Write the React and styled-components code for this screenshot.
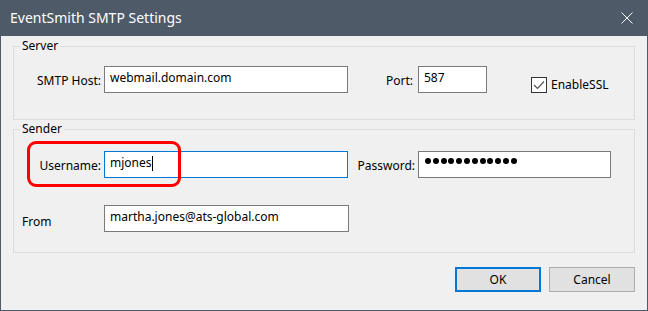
import styled, { createGlobalStyle } from 'styled-components';

const GlobalStyle = createGlobalStyle`
  html, body {
    margin: 0;
    padding: 0;
    background: #f0f0f0;
  }
  body {
    font-family: "Noto Sans", "DejaVu Sans", sans-serif;
    font-size: 12px;
    color: #000;
  }
`;

const Window = styled.div`
  width: 648px;
  height: 311px;
  box-sizing: border-box;
  border: 1px solid #4e5a67;
  border-top: 0;
  background: #f0f0f0;
  display: flex;
  flex-direction: column;
`;

const TitleBar = styled.div`
  height: 36px;
  flex: none;
  background: #4e5a67;
  color: #fff;
  display: flex;
  align-items: center;
  justify-content: space-between;
  padding: 0 14px 0 9px;
`;

const Title = styled.span`
  font-size: 14px;
  line-height: 18px;
`;

const CloseButton = styled.div`
  width: 12px;
  height: 12px;
  display: flex;
`;

const Body = styled.div`
  display: flex;
  flex-direction: column;
  padding: 2px 12px 0 12px;
`;

const GroupBox = styled.fieldset`
  margin: ${props => props.$top || 0}px 0 0 0;
  border: 1px solid #dcdcdc;
  padding: ${props => props.$pad};
  min-width: 0;
  display: flex;
  flex-direction: column;
  gap: 27px;
`;

const Legend = styled.legend`
  padding: 0 2px;
  line-height: 16px;
  font-size: 12px;
`;

const Row = styled.div`
  position: relative;
  display: flex;
  align-items: flex-start;
  height: 27px;
`;

const Label = styled.span`
  width: ${props => props.$width}px;
  margin-right: ${props => props.$gap ?? 3}px;
  box-sizing: border-box;
  padding: ${props => props.$drop ?? 1}px 0 0 ${props => (props.$left ? 2 : 0)}px;
  text-align: ${props => (props.$left ? 'left' : 'right')};
  line-height: 27px;
  white-space: nowrap;
  flex: none;
`;

const TextBox = styled.div`
  width: ${props => props.$width}px;
  height: 27px;
  box-sizing: border-box;
  border: 1px solid ${props => (props.$focused ? '#0078d7' : '#7a7a7a')};
  background: #fff;
  padding: 0 5px;
  line-height: 22px;
  display: flex;
  align-items: flex-start;
  flex: none;
  white-space: nowrap;
`;

const Caret = styled.span`
  width: 1px;
  height: 15px;
  margin-top: 4px;
  background: #000;
`;

const Dots = styled.div`
  display: flex;
  gap: 1.8px;
  margin-top: 6px;
  margin-left: 1px;
`;

const Dot = styled.span`
  width: 6px;
  height: 6px;
  border-radius: 50%;
  background: #000;
`;

const CheckGroup = styled.label`
  display: flex;
  align-items: center;
  margin-left: 44px;
  margin-top: 10px;
`;

const CheckBox = styled.span`
  width: 16px;
  height: 16px;
  box-sizing: border-box;
  border: 1px solid #333;
  background: #fff;
  display: flex;
  align-items: center;
  justify-content: center;
  margin-right: 4px;
`;

const Highlight = styled.div`
  position: absolute;
  left: 7px;
  top: -10px;
  width: 154px;
  height: 46px;
  box-sizing: border-box;
  border: 3px solid #ff0000;
  border-radius: 9px;
  pointer-events: none;
`;

const ButtonRow = styled.div`
  display: flex;
  justify-content: flex-end;
  gap: 8px;
  margin-top: 14px;
`;

const Button = styled.button`
  width: 86px;
  height: 25px;
  box-sizing: border-box;
  background: #e1e1e1;
  border: ${props => (props.$primary ? '2px solid #0078d7' : '1px solid #adadad')};
  font-family: inherit;
  font-size: 12px;
  color: #000;
  padding: 0;
`;

const DOT_COUNT = 12;

export default function App() {
  return (
    <>
      <GlobalStyle />
      <Window>
        <TitleBar>
          <Title>EventSmith SMTP Settings</Title>
          <CloseButton>
            <svg width="12" height="12" viewBox="0 0 12 12">
              <path d="M0.5 0.5 L11.5 11.5 M11.5 0.5 L0.5 11.5" stroke="#fff" strokeWidth="1" />
            </svg>
          </CloseButton>
        </TitleBar>
        <Body>
          <GroupBox $pad="12px 0 26px 6px">
            <Legend>Server</Legend>
            <Row>
              <Label $width={81}>SMTP Host:</Label>
              <TextBox $width={244}>webmail.domain.com</TextBox>
              <Label $width={65} $gap={5}>Port:</Label>
              <TextBox $width={69}>587</TextBox>
              <CheckGroup>
                <CheckBox>
                  <svg width="12" height="10" viewBox="0 0 12 10">
                    <path d="M1 5 L4.5 8.5 L11 1.5" fill="none" stroke="#555" strokeWidth="1.2" />
                  </svg>
                </CheckBox>
                EnableSSL
              </CheckGroup>
            </Row>
          </GroupBox>
          <GroupBox $top={1} $pad="14px 0 20px 6px">
            <Legend>Sender</Legend>
            <Row>
              <Label $width={81}>Username:</Label>
              <TextBox $width={244} $focused>
                mjones
                <Caret />
              </TextBox>
              <Label $width={67}>Password:</Label>
              <TextBox $width={193}>
                <Dots>
                  {Array.from({ length: DOT_COUNT }, (_, i) => (
                    <Dot key={i} />
                  ))}
                </Dots>
              </TextBox>
              <Highlight />
            </Row>
            <Row>
              <Label $width={81} $left $drop={3}>From</Label>
              <TextBox $width={245}>martha.jones@ats-global.com</TextBox>
            </Row>
          </GroupBox>
          <ButtonRow>
            <Button $primary>OK</Button>
            <Button>Cancel</Button>
          </ButtonRow>
        </Body>
      </Window>
    </>
  );
}
